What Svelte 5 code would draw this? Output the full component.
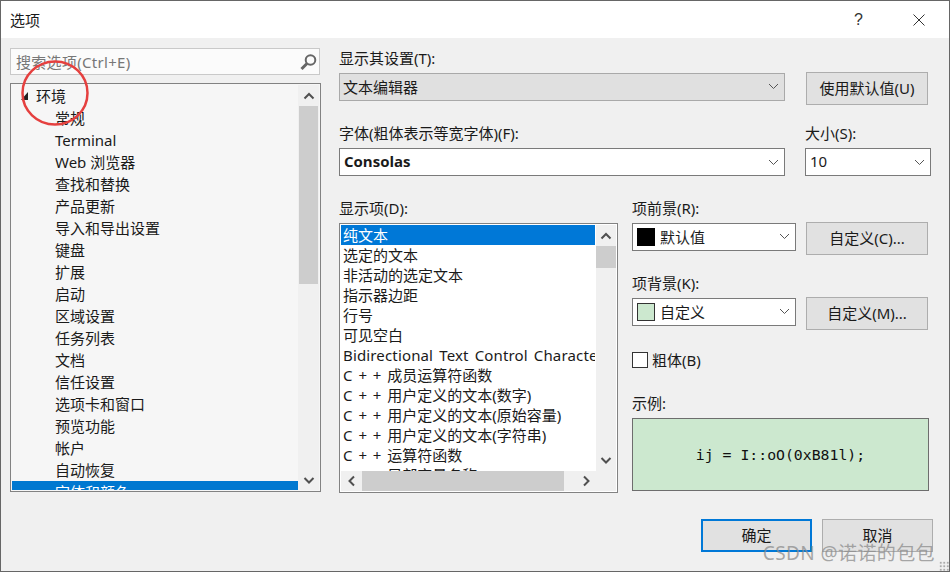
<script>
  const tree = ['常规', 'Terminal', 'Web 浏览器', '查找和替换', '产品更新', '导入和导出设置', '键盘', '扩展', '启动', '区域设置', '任务列表', '文档', '信任设置', '选项卡和窗口', '预览功能', '帐户', '自动恢复', '字体和颜色'];
  const items = ['纯文本', '选定的文本', '非活动的选定文本', '指示器边距', '行号', '可见空白', 'Bidirectional Text Control Character', 'C + + 成员运算符函数', 'C + + 用户定义的文本(数字)', 'C + + 用户定义的文本(原始容量)', 'C + + 用户定义的文本(字符串)', 'C + + 运算符函数', 'C + + 局部变量名称'];
</script>

{#snippet chevron()}
  <svg class="chevron" width="11" height="7" viewBox="0 0 11 7"><path d="M1 1l4.5 4.5L10 1" fill="none" stroke="#555" stroke-width="1"/></svg>
{/snippet}

{#snippet arrow(d)}
  <svg width="12" height="12" viewBox="0 0 12 12"><path {d} fill="none" stroke="#505050" stroke-width="2"/></svg>
{/snippet}

<div class="dialog">
  <header class="titlebar">
    <span class="title">选项</span>
    <span class="help">?</span>
    <svg class="close" width="14" height="14" viewBox="0 0 14 14"><path d="M1.5 1.5l11 11M12.5 1.5l-11 11" stroke="#333" stroke-width="1" fill="none"/></svg>
  </header>

  <div class="content">
    <aside class="side">
      <div class="search">
        <span>搜索选项(Ctrl+E)</span>
        <svg width="18" height="18" viewBox="0 0 18 18"><circle cx="11.5" cy="7" r="4.8" fill="none" stroke="#666" stroke-width="2"/><path d="M8 10.5L2.5 16" stroke="#666" stroke-width="3"/></svg>
      </div>
      <div class="tree">
        <div class="tree-rows">
          <div class="tree-root">
            <svg width="8" height="8" viewBox="0 0 8 8"><path d="M7 0v8H0z" fill="#222"/></svg>
            <span>环境</span>
          </div>
          {#each tree as row, i}
            <div class="tree-row" class:selected={i == tree.length - 1}>{row}</div>
          {/each}
        </div>
        <div class="vscroll tree-scroll">
          <div class="arrow">{@render arrow('M1.5 8.5L6 4l4.5 4.5')}</div>
          <div class="thumb tree-thumb"></div>
          <div class="spacer"></div>
          <div class="arrow">{@render arrow('M1.5 4L6 8.5 10.5 4')}</div>
        </div>
      </div>
    </aside>

    <main class="main">
      <div class="row first">
        <div class="field wide">
          <div class="label">显示其设置(T):</div>
          <div class="select disabled">文本编辑器{@render chevron()}</div>
        </div>
        <button class="btn default-btn">使用默认值(U)</button>
      </div>

      <div class="row second">
        <div class="field wide">
          <div class="label">字体(粗体表示等宽字体)(F):</div>
          <div class="select raised"><b class="font-name">Consolas</b>{@render chevron()}</div>
        </div>
        <div class="field size">
          <div class="label">大小(S):</div>
          <div class="select raised">10{@render chevron()}</div>
        </div>
      </div>

      <div class="row third">
        <div class="field">
          <div class="label">显示项(D):</div>
          <div class="list">
            <div class="list-items">
              {#each items as item, i}
                <div class="list-item" class:selected={i == 0} class:latin={i == 6}>{item}</div>
              {/each}
            </div>
            <div class="vscroll">
              <div class="arrow">{@render arrow('M1.5 8.5L6 4l4.5 4.5')}</div>
              <div class="thumb list-thumb"></div>
              <div class="spacer"></div>
              <div class="arrow list-down">{@render arrow('M1.5 4L6 8.5 10.5 4')}</div>
            </div>
            <div class="hscroll">
              <div class="arrow side-arrow">{@render arrow('M8 1.5L3.5 6 8 10.5')}</div>
              <div class="hthumb"></div>
              <div class="arrow side-arrow">{@render arrow('M4 1.5L8.5 6 4 10.5')}</div>
            </div>
            <div class="corner"></div>
          </div>
        </div>

        <div class="panel">
          <div class="label">项前景(R):</div>
          <div class="color-row">
            <div class="select color"><i class="swatch black"></i>默认值{@render chevron()}</div>
            <button class="btn color-btn">自定义(C)...</button>
          </div>
          <div class="label bg-label">项背景(K):</div>
          <div class="color-row">
            <div class="select color"><i class="swatch green"></i>自定义{@render chevron()}</div>
            <button class="btn color-btn">自定义(M)...</button>
          </div>
          <div class="check-row"><i class="check"></i>粗体(B)</div>
          <div class="label sample-label">示例:</div>
          <div class="sample">ij = I::oO(0xB81l);</div>
        </div>
      </div>
    </main>
  </div>

  <footer class="footer">
    <button class="btn action primary">确定</button>
    <button class="btn action">取消</button>
  </footer>

  <svg class="circle" width="72" height="70" viewBox="0 0 72 70"><ellipse cx="36" cy="35" rx="32.5" ry="31.5" fill="none" stroke="#e5403f" stroke-width="2.5"/></svg>
  <div class="watermark">CSDN @诺诺的包包</div>
  <div class="grip"></div>
</div>

<style>
  :global(body) {
    background: #f0f0f0;
  }

  .dialog {
    position: relative;
    width: 950px;
    height: 572px;
    box-sizing: border-box;
    border: 1px solid #666;
    background: #f0f0f0;
    color: #1a1a1a;
    font-family: "Noto Sans", "Noto Sans CJK SC", sans-serif;
    font-size: 15px;
    line-height: 20px;
    overflow: hidden;
  }

  .titlebar {
    display: flex;
    align-items: center;
    height: 37px;
    background: #fff;
    padding-left: 9px;
  }

  .title {
    flex: 1;
  }

  .help {
    margin-right: 49px;
    font-family: "Liberation Sans", sans-serif;
    font-size: 16px;
    color: #333;
  }

  .close {
    margin-right: 23px;
  }

  .content {
    display: flex;
    padding: 10px 0 0 9px;
  }

  .side {
    width: 311px;
    margin-right: 18px;
  }

  .search {
    display: flex;
    align-items: center;
    justify-content: space-between;
    box-sizing: border-box;
    width: 310px;
    height: 27px;
    padding: 0 2px 0 5px;
    background: #fbfbfb;
    border: 1px solid #c9c9c9;
    color: #777;
    letter-spacing: 0.3px;
  }

  .tree {
    display: flex;
    box-sizing: border-box;
    height: 409px;
    margin-top: 8px;
    padding: 1px;
    border: 1px solid #828282;
    background: #f6f6f6;
  }

  .tree-rows {
    flex: 1;
    overflow: hidden;
  }

  .tree-root {
    display: flex;
    align-items: center;
    height: 22px;
    padding-left: 9px;
  }

  .tree-root span {
    margin-left: 7px;
  }

  .tree-row {
    height: 22px;
    line-height: 22px;
    padding-left: 43px;
  }

  .tree-row.selected {
    background: #0078d0;
    color: #fff;
  }

  .vscroll {
    display: flex;
    flex-direction: column;
    width: 20px;
    background: #f0f0f0;
  }

  .tree-scroll {
    width: 21px;
  }

  .arrow {
    display: flex;
    align-items: center;
    justify-content: center;
    height: 21px;
    flex-shrink: 0;
  }

  .thumb {
    background: #cdcdcd;
  }

  .tree-thumb {
    height: 178px;
    margin: 0 1px;
  }

  .spacer {
    flex: 1;
  }

  .main {
    width: 594px;
  }

  .row {
    display: flex;
  }

  .second {
    margin-top: 18px;
    gap: 20px;
  }

  .third {
    margin-top: 22px;
    gap: 14px;
  }

  .label {
    height: 20px;
    margin-bottom: 5px;
  }

  .wide {
    width: 446px;
  }

  .size {
    width: 126px;
  }

  .select {
    display: flex;
    align-items: center;
    box-sizing: border-box;
    height: 28px;
    padding: 0 0 1px 4px;
    background: #fff;
    border: 1px solid #7a7a7a;
  }

  .select.raised {
    padding-bottom: 3px;
  }

  .select.raised .chevron {
    margin-top: 3px;
  }

  .select.disabled {
    background: #e0e0e0;
    border-color: #a9a9a9;
    padding-left: 3px;
  }

  .font-name {
    font-family: "Open Sans", sans-serif;
    font-weight: 700;
    font-size: 15px;
  }

  .chevron {
    margin-left: auto;
    margin-right: 5px;
  }

  .btn {
    box-sizing: border-box;
    padding: 0 0 2px;
    background: #e1e1e1;
    border: 1px solid #adadad;
    border-radius: 0;
    color: #1a1a1a;
    font: inherit;
  }

  .default-btn {
    width: 122px;
    height: 33px;
    margin: 24px 0 0 21px;
  }

  .list {
    display: grid;
    grid-template-columns: 255px 20px;
    grid-template-rows: 246px 20px;
    box-sizing: border-box;
    width: 279px;
    height: 270px;
    padding: 1px;
    border: 1px solid #828282;
    background: #fff;
  }

  .list-items {
    overflow: hidden;
    background: #fff;
  }

  .list-item {
    width: 254px;
    height: 20px;
    padding-left: 2px;
    box-sizing: border-box;
    white-space: nowrap;
    overflow: hidden;
    word-spacing: 2px;
  }

  .list-item.latin {
    letter-spacing: 0.15px;
  }

  .list-item.selected {
    background: #0078d7;
    color: #fff;
  }

  .list-down {
    margin-bottom: 1px;
  }

  .list-thumb {
    height: 22px;
  }

  .hscroll {
    display: flex;
    align-items: center;
    background: #f0f0f0;
  }

  .side-arrow {
    width: 21px;
    height: 20px;
  }

  .hthumb {
    width: 202px;
    height: 20px;
    background: #cdcdcd;
  }

  .side-arrow:last-child {
    margin-left: auto;
  }

  .corner {
    background: #f0f0f0;
  }

  .panel {
    width: 300px;
  }

  .color-row {
    display: flex;
    gap: 10px;
  }

  .color {
    width: 164px;
  }

  .color-btn {
    width: 122px;
    height: 33px;
    margin-top: -1px;
  }

  .swatch {
    display: block;
    box-sizing: border-box;
    width: 18px;
    height: 18px;
    margin-right: 5px;
  }

  .black {
    background: #000;
  }

  .green {
    background: #cce8cf;
    border: 1px solid #333;
  }

  .bg-label {
    margin-top: 18px;
  }

  .check-row {
    display: flex;
    align-items: center;
    height: 16px;
    margin-top: 22px;
    gap: 4px;
  }

  .check {
    display: block;
    box-sizing: border-box;
    width: 16px;
    height: 16px;
    background: #fff;
    border: 1px solid #333;
  }

  .sample-label {
    margin-top: 25px;
  }

  .sample {
    display: flex;
    align-items: center;
    justify-content: center;
    box-sizing: border-box;
    width: 297px;
    height: 73px;
    background: #cce8cf;
    border: 1px solid #6d6d6d;
    font-family: "DejaVu Sans Mono", monospace;
    font-size: 14.8px;
    color: #111;
  }

  .footer {
    display: flex;
    justify-content: flex-end;
    gap: 10px;
    padding-right: 16px;
    margin-top: 26px;
  }

  .action {
    width: 111px;
    height: 33px;
  }

  .primary {
    border: 2px solid #0078d7;
  }

  .circle {
    position: absolute;
    left: 18px;
    top: 57px;
  }

  .watermark {
    position: absolute;
    right: 14px;
    bottom: 8px;
    color: rgba(140, 140, 140, 0.75);
    font-size: 19px;
    line-height: 20px;
    letter-spacing: 0.4px;
    white-space: nowrap;
  }

  .grip {
    position: absolute;
    right: 0;
    bottom: 0;
    width: 10px;
    height: 10px;
    background: radial-gradient(circle, #aaa 1.2px, transparent 1.4px) 0 0 / 3.5px 3.5px;
  }
</style>
